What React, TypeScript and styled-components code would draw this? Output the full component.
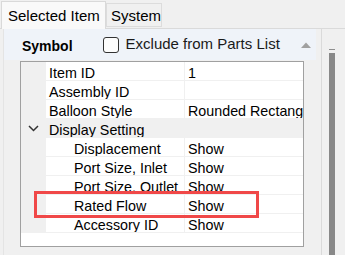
import { createGlobalStyle } from "styled-components";
import styled from "styled-components";

const GlobalStyle = createGlobalStyle`
  html, body {
    margin: 0;
    padding: 0;
    background: #f0f0f0;
  }
  body {
    font-family: "Liberation Sans", Arial, sans-serif;
    color: #000;
  }
`;

const Window = styled.div`
  position: relative;
  width: 345px;
  height: 255px;
  overflow: hidden;
  background: #f0f0f0;
  display: flex;
  flex-direction: column;
`;

const TabStrip = styled.div`
  height: 28px;
  display: flex;
  align-items: flex-end;
  padding-left: 1px;
  position: relative;
  z-index: 1;
`;

const Tab = styled.div<{ $active?: boolean }>`
  box-sizing: border-box;
  font-size: 15px;
  white-space: nowrap;
  border: 1px solid ${(p) => (p.$active ? "#d9d9d9" : "#dcdcdc")};
  border-bottom: ${(p) => (p.$active ? "none" : "1px solid #dcdcdc")};
  background: ${(p) => (p.$active ? "#f9f9f9" : "#f0f0f0")};
  width: ${(p) => (p.$active ? "105px" : "56px")};
  height: ${(p) => (p.$active ? "28px" : "24px")};
  line-height: ${(p) => (p.$active ? "26px" : "23px")};
  padding-left: ${(p) => (p.$active ? "6px" : "4px")};
  padding-top: ${(p) => (p.$active ? "1px" : "0")};
  margin-bottom: ${(p) => (p.$active ? "-1px" : "1px")};
`;

const Body = styled.div`
  flex: 1;
  display: flex;
  border-top: 1px solid #dadada;
`;

const Panel = styled.div`
  width: 321px;
  box-sizing: border-box;
  padding-left: 3px;
`;

const PanelInner = styled.div`
  border-left: 1px solid #e4e4e4;
  height: 100%;
`;

const Header = styled.div`
  width: 312px;
  height: 31px;
  background: #eff3f9;
  display: flex;
  align-items: center;
  padding-left: 18px;
  box-sizing: border-box;
`;

const HeaderTitle = styled.span`
  font-weight: bold;
  font-size: 14px;
  line-height: 16px;
  padding-top: 2px;
`;

const CheckBox = styled.span`
  box-sizing: border-box;
  width: 16px;
  height: 16px;
  margin-left: 30px;
  border: 1px solid #333;
  border-radius: 3px;
  background: #fdfdfd;
`;

const HeaderLabel = styled.span`
  font-size: 15px;
  line-height: 17px;
  margin-left: 7px;
  padding-bottom: 2px;
  color: #1a1a1a;
`;

const Collapse = styled.svg`
  margin-left: auto;
  margin-right: 5px;
`;

const Grid = styled.div`
  box-sizing: border-box;
  margin-top: 1px;
  margin-left: 16px;
  width: 284px;
  height: 186px;
  border: 1px solid #a0a0a0;
  background: #fff;
  overflow: hidden;
`;

const Row = styled.div`
  display: grid;
  grid-template-columns: 25px 138px 1fr;
  height: 19px;
`;

const Gutter = styled.div`
  background: #f0f0f0;
  display: flex;
  align-items: center;
  justify-content: center;
  padding-right: 1px;
`;

const Cell = styled.div<{ $indent?: number; $category?: boolean; $value?: boolean }>`
  box-sizing: border-box;
  height: 19px;
  font-size: 14.3px;
  line-height: 18px;
  padding-top: 2px;
  padding-left: ${(p) => (p.$indent ? 3 + p.$indent * 25 : 3)}px;
  white-space: nowrap;
  overflow: hidden;
  border-bottom: 1px solid #f0f0f0;
  border-left: ${(p) => (p.$value ? "1px solid #f0f0f0" : "none")};
  background: ${(p) => (p.$category ? "#f0f0f0" : "#fff")};
`;

const ScrollTrack = styled.div`
  flex: 1;
  border-left: 1px solid #dadada;
  display: flex;
  flex-direction: column;
  padding: 20px 0 0 7px;
`;

const ThumbCap = styled.div`
  width: 6px;
  height: 1px;
  background: #8f8f8f;
`;

const Thumb = styled.div`
  width: 6px;
  flex: 1;
  margin-top: 3px;
  background: #888;
`;

const Highlight = styled.div`
  position: absolute;
  left: 34px;
  top: 191px;
  width: 225px;
  height: 27px;
  box-sizing: border-box;
  border: 3px solid #f04848;
  pointer-events: none;
`;

interface PropRow {
  name: string;
  value: string;
  level?: number;
  category?: boolean;
}

const rows: PropRow[] = [
  { name: "Item ID", value: "1" },
  { name: "Assembly ID", value: "" },
  { name: "Balloon Style", value: "Rounded Rectangle" },
  { name: "Display Setting", value: "", category: true },
  { name: "Displacement", value: "Show", level: 1 },
  { name: "Port Size, Inlet", value: "Show", level: 1 },
  { name: "Port Size, Outlet", value: "Show", level: 1 },
  { name: "Rated Flow", value: "Show", level: 1 },
  { name: "Accessory ID", value: "Show", level: 1 },
];

function Chevron() {
  return (
    <svg width="11" height="7" viewBox="0 0 11 7">
      <polyline points="1,1 5.5,5.5 10,1" fill="none" stroke="#333" strokeWidth="1.5" />
    </svg>
  );
}

export default function App() {
  return (
    <>
      <GlobalStyle />
      <Window>
        <TabStrip>
          <Tab $active>Selected Item</Tab>
          <Tab>System</Tab>
        </TabStrip>
        <Body>
          <Panel>
            <PanelInner>
              <Header>
                <HeaderTitle>Symbol</HeaderTitle>
                <CheckBox />
                <HeaderLabel>Exclude from Parts List</HeaderLabel>
                <Collapse width="10" height="6" viewBox="0 0 10 6">
                  <polygon points="0,6 5,0.5 10,6" fill="#a0a0a0" />
                </Collapse>
              </Header>
              <Grid>
                {rows.map((r) => (
                  <Row key={r.name}>
                    <Gutter>{r.category && <Chevron />}</Gutter>
                    <Cell $indent={r.level} $category={r.category}>
                      {r.name}
                    </Cell>
                    <Cell $value $category={r.category}>
                      {r.value}
                    </Cell>
                  </Row>
                ))}
              </Grid>
            </PanelInner>
          </Panel>
          <ScrollTrack>
            <ThumbCap />
            <Thumb />
          </ScrollTrack>
        </Body>
        <Highlight />
      </Window>
    </>
  );
}
